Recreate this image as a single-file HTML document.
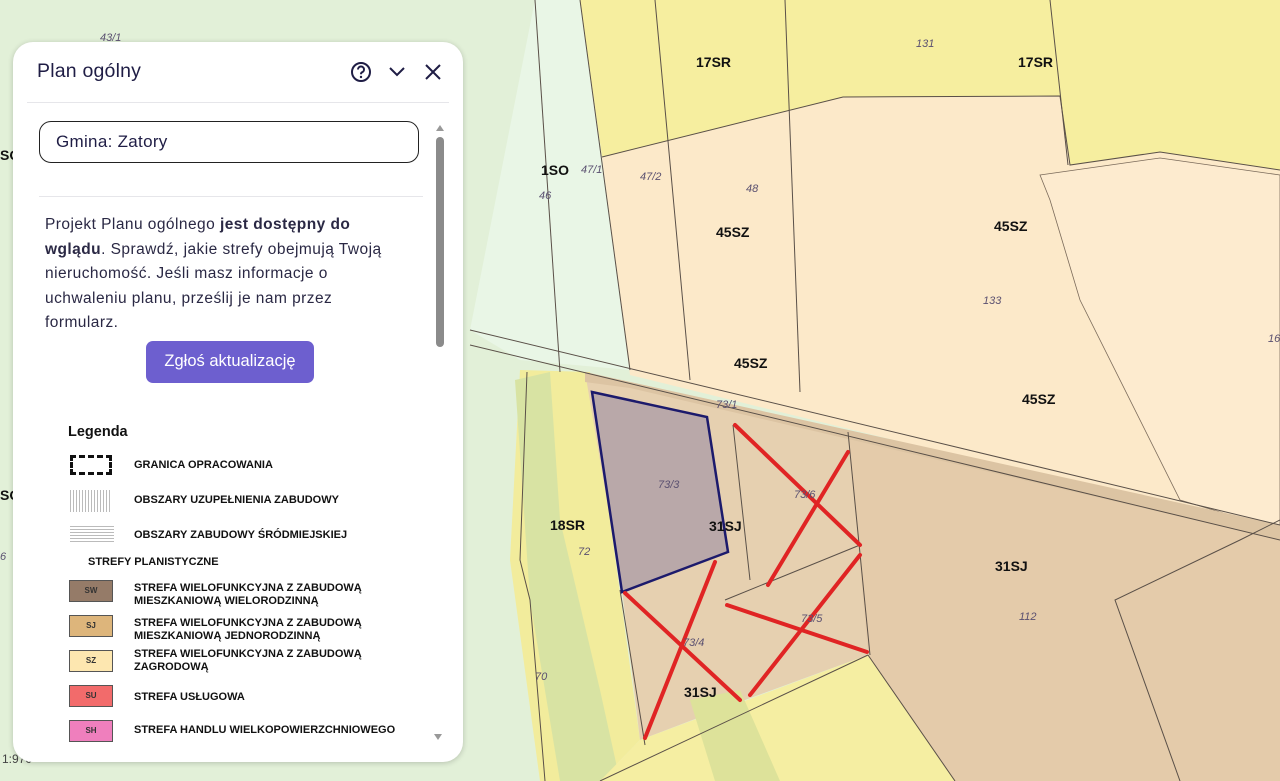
<!DOCTYPE html>
<html><head><meta charset="utf-8"><style>
*{margin:0;padding:0;box-sizing:border-box}
body{width:1280px;height:781px;overflow:hidden;position:relative;font-family:"Liberation Sans",sans-serif;background:#e1efd6}
svg.map{position:absolute;left:0;top:0}
.panel{position:absolute;left:13px;top:42px;width:450px;height:720px;background:#fff;border-radius:20px;box-shadow:0 1px 6px rgba(0,0,0,.2);overflow:hidden;color:#1f1d45}
.hdr{position:absolute;left:24px;top:18px;font-size:19.5px;letter-spacing:.2px}
.div{position:absolute;left:14px;right:14px;height:1px;background:#e6e6ea}
.inp{position:absolute;left:26px;top:79px;width:380px;height:42px;border:1.3px solid #222;border-radius:12px;font-size:17px;padding:10px 16px;letter-spacing:.3px}
.p{position:absolute;left:32px;top:171px;width:400px;font-size:15.5px;line-height:24.5px;color:#2a2844;letter-spacing:.45px;white-space:nowrap}
.btn{position:absolute;left:133px;top:299px;width:168px;height:42px;background:#6d5fcf;color:#fff;border-radius:7px;font-size:16.5px;text-align:center;line-height:40px}
.sb{position:absolute;left:423px;top:95px;width:8px;height:210px;background:#8b8b8b;border-radius:4px}
.lg{position:absolute;left:55px;font-size:11px;font-weight:bold;color:#111}
.sw{position:absolute;left:56px;width:44px;height:22px;border:1px solid #555;font-size:8px;font-weight:bold;text-align:center;line-height:20px;color:#333}
.lt{position:absolute;left:121px;font-size:11px;font-weight:bold;color:#111;line-height:13px}
</style></head><body>
<svg class="map" width="1280" height="781" viewBox="0 0 1280 781">
<rect width="1280" height="781" fill="#e2f0d8"/>
<polygon points="535,0 600,0 630,370 520,360 470,330" fill="#e9f6e6"/>
<polygon points="580,0 1280,0 1280,170 1160,152 1070,165 1060,96 843,97 602,157" fill="#f6ee9f"/>
<polygon points="602,157 843,97 1060,96 1070,165 1160,152 1280,170 1280,535 630,375" fill="#fce9c9"/>
<polygon points="1040,175 1160,158 1280,175 1280,530 1180,500 1080,300 1050,200" fill="#fdebcf" stroke="#7a6a5a" stroke-width=".8"/>
<polygon points="520,370 590,372 640,740 600,781 540,781 510,560" fill="#f2ec9c"/>
<polygon points="515,380 550,372 560,520 600,690 620,781 560,781 530,600" fill="#d8e3a3"/>
<polygon points="585,372 1280,538 1280,781 955,781 868,655 745,700 640,740 622,590" fill="#e6d0b0"/>
<polygon points="848,432 1280,538 1280,781 955,781 868,655" fill="#e4cbaa"/>
<polygon points="640,740 868,655 955,781 600,781" fill="#f5eea2"/>
<polygon points="690,700 740,690 780,781 715,781" fill="#dde29a"/>
<polygon points="585,372 1280,525 1280,540 630,388 585,382" fill="#dcc4a3"/>
<g stroke="#5a5048" stroke-width="1" fill="none">
<line x1="470" y1="330" x2="1280" y2="525"/><line x1="470" y1="345" x2="1280" y2="540"/>
<polyline points="602,157 843,97 1060,96 1070,165 1160,152 1280,170"/>
<line x1="580" y1="0" x2="630" y2="370"/><line x1="655" y1="0" x2="690" y2="380"/><line x1="785" y1="0" x2="800" y2="392"/>
<line x1="1050" y1="0" x2="1068" y2="165"/>
<line x1="535" y1="0" x2="560" y2="372"/>
<polyline points="527,372 520,560 530,600 545,781"/>
<line x1="848" y1="432" x2="870" y2="655"/><line x1="868" y1="655" x2="955" y2="781"/>
<line x1="620" y1="590" x2="645" y2="745"/><line x1="600" y1="781" x2="868" y2="655"/>
<line x1="725" y1="600" x2="860" y2="545"/><line x1="733" y1="425" x2="750" y2="580"/>
<polyline points="1280,520 1240,540 1115,600 1180,781"/>
</g>
<polygon points="592,392 707,417 728,552 622,592" fill="#b9a8a9" stroke="#1c1a6c" stroke-width="2.5"/>
<g stroke="#e02424" stroke-width="4" stroke-linecap="round">
<line x1="735" y1="425" x2="860" y2="545"/><line x1="848" y1="452" x2="768" y2="585"/>
<line x1="727" y1="605" x2="867" y2="652"/><line x1="860" y1="555" x2="750" y2="695"/>
<line x1="625" y1="593" x2="740" y2="700"/><line x1="715" y1="562" x2="645" y2="738"/>
</g>
<g font-family="Liberation Sans" font-weight="bold" font-size="14" fill="#111">
<text x="696" y="67">17SR</text><text x="1018" y="67">17SR</text><text x="541" y="175">1SO</text>
<text x="716" y="237">45SZ</text><text x="994" y="231">45SZ</text><text x="734" y="368">45SZ</text><text x="1022" y="404">45SZ</text>
<text x="550" y="530">18SR</text><text x="709" y="531">31SJ</text><text x="995" y="571">31SJ</text><text x="684" y="697">31SJ</text>
<text x="0" y="160">SO</text><text x="0" y="500">SO</text>
</g>
<g font-family="Liberation Sans" font-style="italic" font-size="11" fill="#5a5070">
<text x="916" y="47">131</text><text x="581" y="173">47/1</text><text x="640" y="180">47/2</text><text x="539" y="199">46</text><text x="746" y="192">48</text>
<text x="983" y="304">133</text><text x="716" y="408">73/1</text><text x="658" y="488">73/3</text><text x="794" y="498">73/6</text>
<text x="578" y="555">72</text><text x="1019" y="620">112</text><text x="801" y="622">73/5</text><text x="683" y="646">73/4</text><text x="535" y="680">70</text>
<text x="100" y="41">43/1</text><text x="1268" y="342">16</text><text x="0" y="560">6</text>
</g>
<text x="2" y="763" font-family="Liberation Sans" font-size="12" fill="#444">1:970</text>
</svg>
<div class="panel">
<div class="hdr">Plan ogólny</div>
<svg style="position:absolute;left:337px;top:19px" width="22" height="22" viewBox="0 0 22 22"><circle cx="11" cy="11" r="9" fill="none" stroke="#1f1d45" stroke-width="2"/><path d="M8 8.5a3 3 0 1 1 4 2.8c-.8.4-1 1-1 2" fill="none" stroke="#1f1d45" stroke-width="2"/><circle cx="11" cy="16" r="1.2" fill="#1f1d45"/></svg>
<svg style="position:absolute;left:375px;top:22px" width="18" height="16" viewBox="0 0 18 16"><path d="M2 4l7 7 7-7" fill="none" stroke="#1f1d45" stroke-width="2"/></svg>
<svg style="position:absolute;left:411px;top:21px" width="18" height="18" viewBox="0 0 18 18"><path d="M2 2l14 14M16 2L2 16" stroke="#1f1d45" stroke-width="2"/></svg>
<div class="div" style="top:60px"></div>
<div class="inp">Gmina: Zatory</div>
<div class="div" style="top:154px;left:26px;right:40px"></div>
<div class="p">Projekt Planu ogólnego <b>jest dostępny do</b><br><b>wglądu</b>. Sprawdź, jakie strefy obejmują Twoją<br>nieruchomość. Jeśli masz informacje o<br>uchwaleniu planu, prześlij je nam przez<br>formularz.</div>
<div class="btn">Zgłoś aktualizację</div>
<div style="position:absolute;left:423px;top:83px;width:0;height:0;border-left:4px solid transparent;border-right:4px solid transparent;border-bottom:6px solid #999"></div>
<div class="sb"></div>
<div style="position:absolute;left:421px;top:692px;width:0;height:0;border-left:4px solid transparent;border-right:4px solid transparent;border-top:6px solid #999"></div>
<div class="lg" style="top:382px;font-size:14.5px">Legenda</div>
<div style="position:absolute;left:57px;top:413px;width:42px;height:20px;border:3px dashed #111"></div>
<div class="lt" style="top:417px">GRANICA OPRACOWANIA</div>
<div style="position:absolute;left:57px;top:448px;width:42px;height:22px;background:repeating-linear-gradient(90deg,#bbb 0 1px,#fff 1px 3px)"></div>
<div class="lt" style="top:452px">OBSZARY UZUPEŁNIENIA ZABUDOWY</div>
<div style="position:absolute;left:57px;top:484px;width:44px;height:18px;background:repeating-linear-gradient(180deg,#bbb 0 1px,#fff 1px 3px)"></div>
<div class="lt" style="top:487px">OBSZARY ZABUDOWY ŚRÓDMIEJSKIEJ</div>
<div class="lt" style="top:514px;left:75px">STREFY PLANISTYCZNE</div>
<div class="sw" style="top:538px;background:#957b68">SW</div>
<div class="lt" style="top:540px">STREFA WIELOFUNKCYJNA Z ZABUDOWĄ<br>MIESZKANIOWĄ WIELORODZINNĄ</div>
<div class="sw" style="top:573px;background:#ddb57b">SJ</div>
<div class="lt" style="top:575px">STREFA WIELOFUNKCYJNA Z ZABUDOWĄ<br>MIESZKANIOWĄ JEDNORODZINNĄ</div>
<div class="sw" style="top:608px;background:#fde7b0">SZ</div>
<div class="lt" style="top:606px">STREFA WIELOFUNKCYJNA Z ZABUDOWĄ<br>ZAGRODOWĄ</div>
<div class="sw" style="top:643px;background:#f26b6b">SU</div>
<div class="lt" style="top:649px">STREFA USŁUGOWA</div>
<div class="sw" style="top:678px;background:#ef7fbd">SH</div>
<div class="lt" style="top:682px">STREFA HANDLU WIELKOPOWIERZCHNIOWEGO</div>
</div>
</body></html>
